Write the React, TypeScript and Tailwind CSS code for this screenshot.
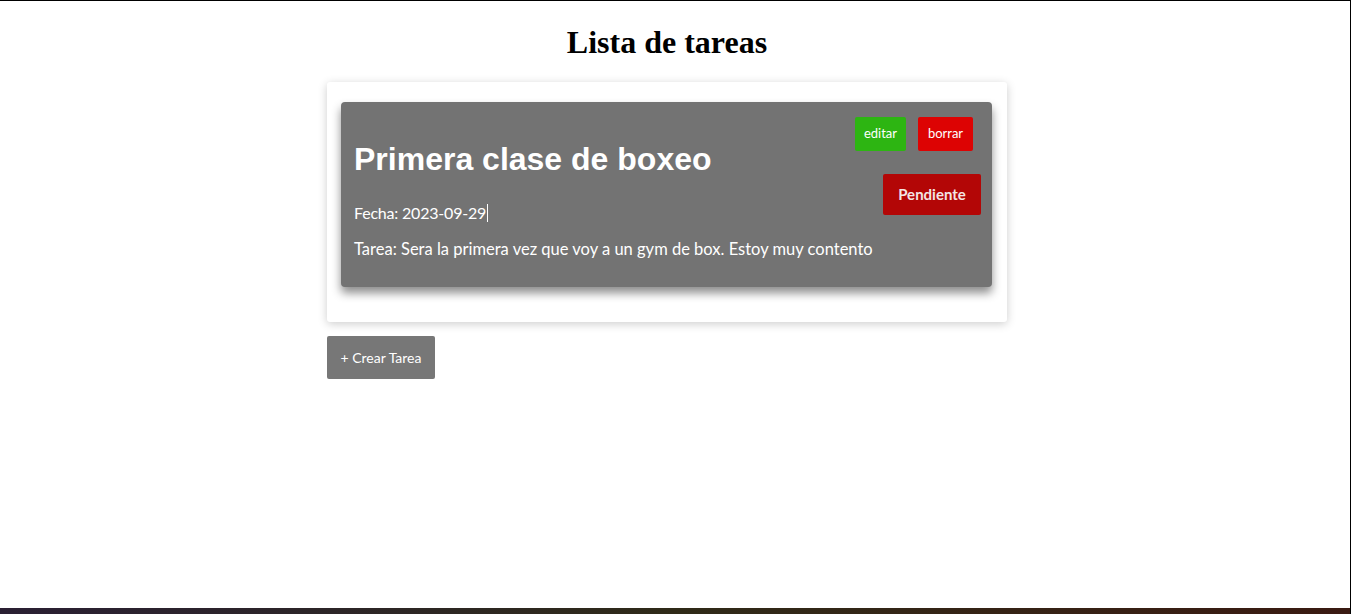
import React from 'react';

const body = '"Trebuchet MS", Lato, "Open Sans", sans-serif';

interface Tarea {
  id: number;
  titulo: string;
  fecha: string;
  descripcion: string;
  estado: string;
}

const tareas: Tarea[] = [
  {
    id: 1,
    titulo: 'Primera clase de boxeo',
    fecha: '2023-09-29',
    descripcion: 'Sera la primera vez que voy a un gym de box. Estoy muy contento',
    estado: 'Pendiente',
  },
];

function TareaCard({ tarea }: { tarea: Tarea }) {
  return (
    <div className="flex h-[185px] justify-between rounded-[4px] bg-[#737373] pl-[13px] pr-[11px] pt-[15px] text-white shadow-[0_6px_10px_rgba(0,0,0,0.45)]">
      <div className="min-w-0 flex-1 whitespace-nowrap">
        <h2
          className="mt-[24px] text-[32px] font-bold leading-[37px]"
          style={{ fontFamily: '"Liberation Sans", Arial, sans-serif' }}
        >
          {tarea.titulo}
        </h2>
        <p className="mt-[23px] text-[16px] leading-[20px] tracking-[-0.2px]">
          Fecha: {tarea.fecha}
          <span className="ml-[1px] inline-block h-[18px] w-px translate-y-[3px] bg-white" />
        </p>
        <p className="mt-[16px] text-[16.5px] leading-[20px]">Tarea: {tarea.descripcion}</p>
      </div>
      <div className="flex shrink-0 flex-col items-end">
        <div className="mr-[8px] flex gap-[12px]">
          <button className="h-[34px] w-[51px] rounded-[2px] bg-[#2db512] text-[13px] text-white">editar</button>
          <button className="h-[34px] w-[55px] rounded-[2px] bg-[#dd0303] text-[13px] text-white">borrar</button>
        </div>
        <button className="mt-[23px] h-[41px] w-[98px] rounded-[2px] bg-[#b30606] text-[15px] font-bold text-[#f3e4e4]">
          {tarea.estado}
        </button>
      </div>
    </div>
  );
}

export default function App() {
  return (
    <div className="flex h-[614px] w-[1351px] flex-col overflow-hidden border-t border-r border-black bg-white" style={{ fontFamily: body }}>
      <div className="flex flex-1 flex-col items-center pr-[16px]">
        <h1
          className="mt-[21px] text-[32px] font-bold leading-[40px] text-black"
          style={{ fontFamily: '"Liberation Serif", "Times New Roman", serif' }}
        >
          Lista de tareas
        </h1>
        <div className="mt-[20px] w-[680px]">
          <div className="rounded-[3px] bg-white pl-[14px] pr-[15px] pt-[20px] pb-[35px] shadow-[0_2px_10px_rgba(0,0,0,0.2)]">
            {tareas.map((t) => (
              <TareaCard key={t.id} tarea={t} />
            ))}
          </div>
          <button className="mt-[14px] h-[43px] w-[108px] rounded-[2px] bg-[#777777] text-[14px] text-white">
            + Crear Tarea
          </button>
        </div>
      </div>
      <div className="h-[6px] bg-gradient-to-r from-[#2a1f33] via-[#2f2a18] to-[#3a1a12]" />
    </div>
  );
}
